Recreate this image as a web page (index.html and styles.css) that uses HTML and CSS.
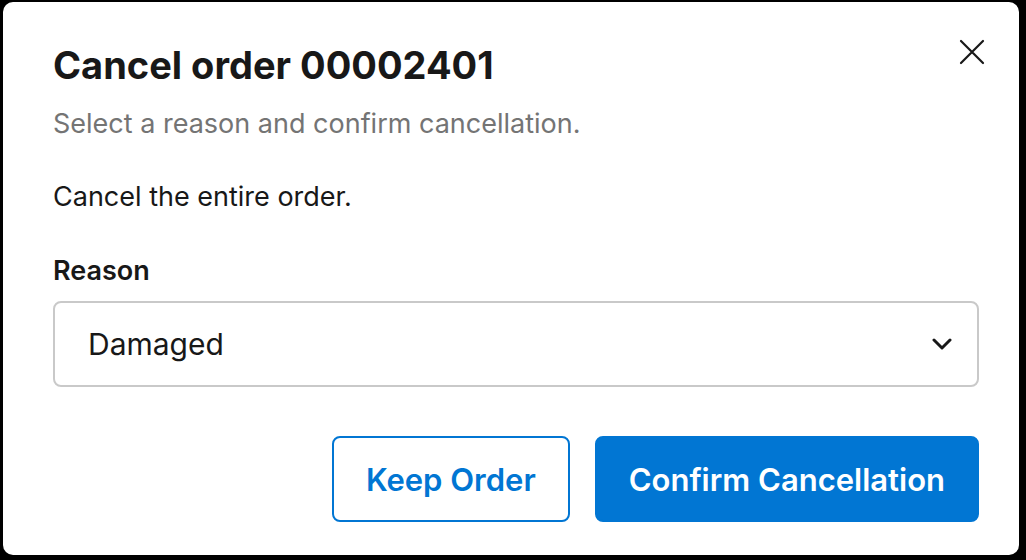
FILE: index.html
```html
<!DOCTYPE html>
<html lang="en">

<head>
    <meta charset="UTF-8">
    <meta name="viewport" content="width=device-width, initial-scale=1.0">
    <title>Cancel order</title>

    <link rel="stylesheet" href="styles.css">

</head>

<body>

    <div class="modal">
        <div class="modal-header">
            <div>
                <h1 class="modal-title">Cancel order 00002401</h1>
                <p class="modal-subtitle">Select a reason and confirm cancellation.</p>
            </div>
            <button class="close-btn" title="Close">
                <svg width="26" height="26" viewBox="0 0 26 26">
                    <path d="M2 2 L24 24 M24 2 L2 24" stroke="#181818" stroke-width="2.2" stroke-linecap="round" fill="none" />
                </svg>
            </button>
        </div>

        <p class="modal-text">Cancel the entire order.</p>

        <label class="field-label" for="reason">Reason</label>
        <div class="select-box" id="reason">
            <span>Damaged</span>
            <svg width="20" height="12" viewBox="0 0 20 12">
                <path d="M2 2 L10 10 L18 2" stroke="#181818" stroke-width="3" stroke-linecap="round" stroke-linejoin="round" fill="none" />
            </svg>
        </div>

        <div class="modal-footer">
            <button class="btn btn-neutral">Keep Order</button>
            <button class="btn btn-brand">Confirm Cancellation</button>
        </div>
    </div>

</body>

</html>
```

FILE: styles.css
```css
body {
    margin: 0;
    background: #000;
    font-family: Inter, "Noto Sans", sans-serif;
    color: #181818;
}

.modal {
    margin: 2px 7px 5px 3px;
    height: 553px;
    box-sizing: border-box;
    background: #fff;
    border-radius: 10px;
    padding: 40px 40px 0 50px;
}

.modal-header {
    display: flex;
    justify-content: space-between;
    align-items: flex-start;
}

.modal-title {
    margin: 0;
    font-size: 38px;
    line-height: 46px;
    font-weight: 700;
}

.modal-subtitle {
    margin: 20px 0 0;
    font-size: 27px;
    line-height: 32px;
    color: #747474;
}

.close-btn {
    border: none;
    background: none;
    padding: 0;
    margin: -3px -6px 0 0;
    cursor: pointer;
}

.modal-text {
    margin: 41px 0 0;
    font-size: 27px;
    line-height: 32px;
}

.field-label {
    display: block;
    margin-top: 42px;
    font-size: 27px;
    line-height: 32px;
    font-weight: 600;
}

.select-box {
    margin-top: 14px;
    height: 86px;
    box-sizing: border-box;
    border: 2px solid #c9c9c9;
    border-radius: 8px;
    display: flex;
    align-items: center;
    justify-content: space-between;
    padding: 0 25px 0 33px;
    font-size: 30px;
}

.modal-footer {
    display: flex;
    justify-content: flex-end;
    gap: 25px;
    margin-top: 49px;
}

.btn {
    height: 86px;
    border-radius: 8px;
    font-family: Inter, "Noto Sans", sans-serif;
    font-size: 31px;
    font-weight: 600;
    padding: 0 32px;
    cursor: pointer;
}

.btn-neutral {
    background: #fff;
    color: #0176d3;
    border: 2px solid #0176d3;
}

.btn-brand {
    background: #0176d3;
    color: #fff;
    border: 2px solid #0176d3;
}
```
